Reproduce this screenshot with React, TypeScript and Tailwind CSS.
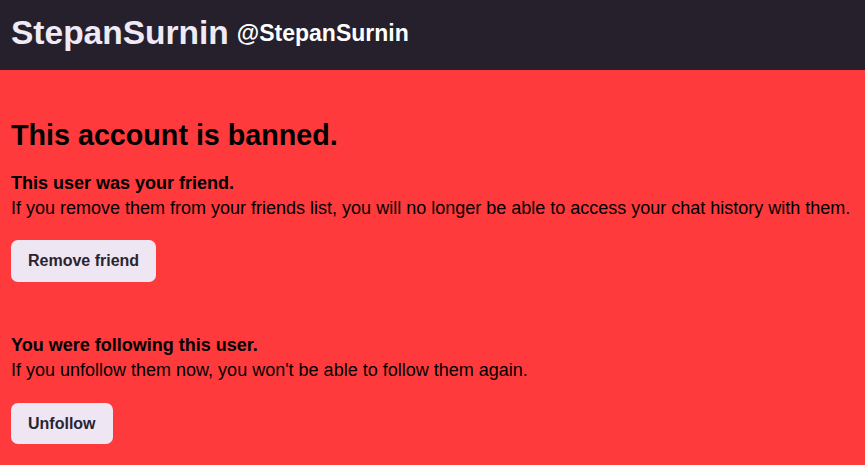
export default function App() {
  return (
    <div className="min-h-[465px] bg-[#ff3a3d] font-['Liberation_Sans',Arial,sans-serif] text-black">
      <header className="flex h-[70px] items-center gap-[8px] bg-[#25202b] px-[11px] pb-[4px]">
        <h1 className="text-[33.5px] font-bold leading-none text-[#efeaf6]">StepanSurnin</h1>
        <span className="text-[23px] font-bold leading-none text-white">@StepanSurnin</span>
      </header>

      <main className="px-[11px] pt-[49px]">
        <h2 className="text-[28.7px] font-bold leading-[32px]">This account is banned.</h2>

        <section className="mt-[20px]">
          <p className="text-[18px] font-bold leading-[25px]">This user was your friend.</p>
          <p className="text-[18px] leading-[25px]">
            If you remove them from your friends list, you will no longer be able to access your chat history with them.
          </p>
          <button className="mt-[19px] h-[42px] rounded-[7px] bg-[#efe6f3] px-[17px] text-[16px] font-bold text-[#2a2431]">
            Remove friend
          </button>
        </section>

        <section className="mt-[51px]">
          <p className="text-[18px] font-bold leading-[25px]">You were following this user.</p>
          <p className="text-[18px] leading-[25px]">
            If you unfollow them now, you won't be able to follow them again.
          </p>
          <button className="mt-[20px] h-[41px] rounded-[7px] bg-[#efe6f3] px-[17px] text-[16px] font-bold text-[#2a2431]">
            Unfollow
          </button>
        </section>
      </main>
    </div>
  );
}
